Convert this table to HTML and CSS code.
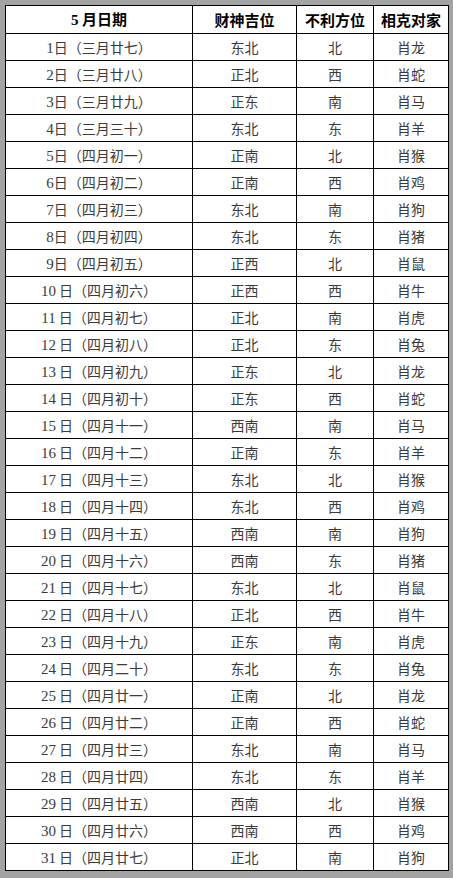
FILE: index.html
```html
<!DOCTYPE html>
<html lang="zh">
<head>
<meta charset="utf-8">
<link rel="stylesheet" href="styles.css">
</head>
<body>
<div class="frame">
<table class="cal">
<colgroup><col class="c1"><col class="c2"><col class="c3"><col class="c4"></colgroup>
<thead>
<tr><th><span class="num">5</span> 月日期</th><th>财神吉位</th><th>不利方位</th><th>相克对家</th></tr>
</thead>
<tbody id="rows">
<tr><td><span class="num">1</span>日（三月廿七）</td><td>东北</td><td>北</td><td>肖龙</td></tr>
<tr><td><span class="num">2</span>日（三月廿八）</td><td>正北</td><td>西</td><td>肖蛇</td></tr>
<tr><td><span class="num">3</span>日（三月廿九）</td><td>正东</td><td>南</td><td>肖马</td></tr>
<tr><td><span class="num">4</span>日（三月三十）</td><td>东北</td><td>东</td><td>肖羊</td></tr>
<tr><td><span class="num">5</span>日（四月初一）</td><td>正南</td><td>北</td><td>肖猴</td></tr>
<tr><td><span class="num">6</span>日（四月初二）</td><td>正南</td><td>西</td><td>肖鸡</td></tr>
<tr><td><span class="num">7</span>日（四月初三）</td><td>东北</td><td>南</td><td>肖狗</td></tr>
<tr><td><span class="num">8</span>日（四月初四）</td><td>东北</td><td>东</td><td>肖猪</td></tr>
<tr><td><span class="num">9</span>日（四月初五）</td><td>正西</td><td>北</td><td>肖鼠</td></tr>
<tr><td><span class="num">10</span> 日（四月初六）</td><td>正西</td><td>西</td><td>肖牛</td></tr>
<tr><td><span class="num">11</span> 日（四月初七）</td><td>正北</td><td>南</td><td>肖虎</td></tr>
<tr><td><span class="num">12</span> 日（四月初八）</td><td>正北</td><td>东</td><td>肖兔</td></tr>
<tr><td><span class="num">13</span> 日（四月初九）</td><td>正东</td><td>北</td><td>肖龙</td></tr>
<tr><td><span class="num">14</span> 日（四月初十）</td><td>正东</td><td>西</td><td>肖蛇</td></tr>
<tr><td><span class="num">15</span> 日（四月十一）</td><td>西南</td><td>南</td><td>肖马</td></tr>
<tr><td><span class="num">16</span> 日（四月十二）</td><td>正南</td><td>东</td><td>肖羊</td></tr>
<tr><td><span class="num">17</span> 日（四月十三）</td><td>东北</td><td>北</td><td>肖猴</td></tr>
<tr><td><span class="num">18</span> 日（四月十四）</td><td>东北</td><td>西</td><td>肖鸡</td></tr>
<tr><td><span class="num">19</span> 日（四月十五）</td><td>西南</td><td>南</td><td>肖狗</td></tr>
<tr><td><span class="num">20</span> 日（四月十六）</td><td>西南</td><td>东</td><td>肖猪</td></tr>
<tr><td><span class="num">21</span> 日（四月十七）</td><td>东北</td><td>北</td><td>肖鼠</td></tr>
<tr><td><span class="num">22</span> 日（四月十八）</td><td>正北</td><td>西</td><td>肖牛</td></tr>
<tr><td><span class="num">23</span> 日（四月十九）</td><td>正东</td><td>南</td><td>肖虎</td></tr>
<tr><td><span class="num">24</span> 日（四月二十）</td><td>东北</td><td>东</td><td>肖兔</td></tr>
<tr><td><span class="num">25</span> 日（四月廿一）</td><td>正南</td><td>北</td><td>肖龙</td></tr>
<tr><td><span class="num">26</span> 日（四月廿二）</td><td>正南</td><td>西</td><td>肖蛇</td></tr>
<tr><td><span class="num">27</span> 日（四月廿三）</td><td>东北</td><td>南</td><td>肖马</td></tr>
<tr><td><span class="num">28</span> 日（四月廿四）</td><td>东北</td><td>东</td><td>肖羊</td></tr>
<tr><td><span class="num">29</span> 日（四月廿五）</td><td>西南</td><td>北</td><td>肖猴</td></tr>
<tr><td><span class="num">30</span> 日（四月廿六）</td><td>西南</td><td>西</td><td>肖鸡</td></tr>
<tr><td><span class="num">31</span> 日（四月廿七）</td><td>正北</td><td>南</td><td>肖狗</td></tr>
</tbody>
</table>
</div>
</body>
</html>
```
FILE: styles.css
```css
html, body {
  margin: 0;
  padding: 0;
  background: #a3a3a3;
}
.frame {
  padding: 5px 6px 6px 5px;
}
.cal {
  border-collapse: collapse;
  width: 443px;
  table-layout: fixed;
  background: #fff;
  font-family: "Noto Sans CJK SC", "Liberation Serif", serif;
}
.c1 { width: 187px; }
.c2 { width: 104px; }
.c3 { width: 77px; }
.c4 { width: 75px; }
.cal th, .cal td {
  border: 1px solid #000;
  height: 27px;
  box-sizing: border-box;
  padding: 0;
  text-align: center;
  vertical-align: middle;
  line-height: 20px;
}
.cal th {
  height: 28px;
  font-size: 15px;
  font-weight: bold;
  color: #000;
}
.cal td {
  font-size: 14px;
  color: #3a3a3a;
}
.num {
  font-family: "Liberation Serif", serif;
  font-size: 15px;
}
```
